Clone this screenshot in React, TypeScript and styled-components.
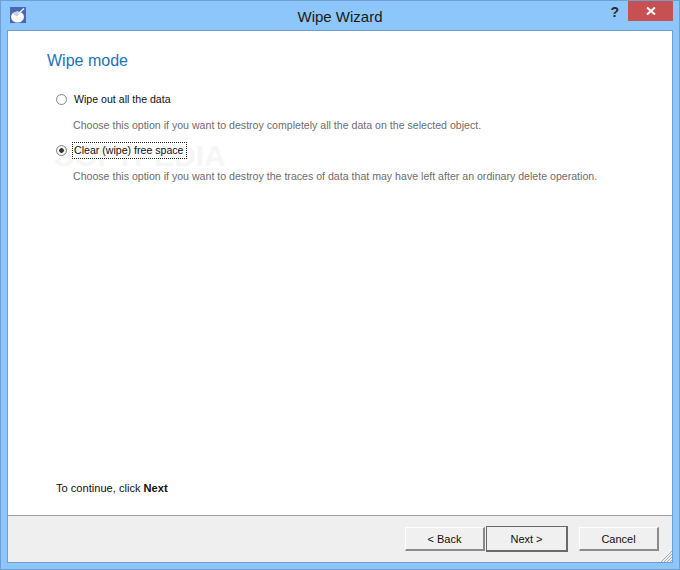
import React from "react";
import styled, { createGlobalStyle } from "styled-components";

const GlobalStyle = createGlobalStyle`
  html, body {
    margin: 0;
    padding: 0;
    width: 680px;
    height: 570px;
    overflow: hidden;
    font-family: "Liberation Sans", Arial, sans-serif;
  }
`;

const options = [
  {
    label: "Wipe out all the data",
    hint: "Choose this option if you want to destroy completely all the data on the selected object.",
    checked: false,
  },
  {
    label: "Clear (wipe) free space",
    hint: "Choose this option if you want to destroy the traces of data that may have left after an ordinary delete operation.",
    checked: true,
  },
];

const AppIcon = () => (
  <S.IconBox>
    <svg width="16" height="16" viewBox="0 0 16 16">
      <rect width="16" height="16" fill="#4a66b4" />
      <ellipse cx="7.5" cy="10" rx="6.5" ry="5.5" fill="#fff" />
      <path d="M3 7 L7 4 L10.5 6.5 L7 9.5 Z" fill="#c4cde6" />
      <path d="M8 7 L14 1.5" stroke="#e8ecf6" strokeWidth="1.6" />
    </svg>
  </S.IconBox>
);

const App = () => {
  return (
    <>
      <GlobalStyle />
      <S.Window>
        <S.TitleBar>
          <AppIcon />
          <S.Title>Wipe Wizard</S.Title>
          <S.Help>?</S.Help>
          <S.Close>
            <svg width="10" height="8" viewBox="0 0 10 8">
              <path d="M1 0.5 L9 7.5 M9 0.5 L1 7.5" stroke="#fff" strokeWidth="2" />
            </svg>
          </S.Close>
        </S.TitleBar>
        <S.Client>
          <S.Content>
            <S.Watermark>SOFTPEDIA</S.Watermark>
            <S.Heading>Wipe mode</S.Heading>
            <S.Options>
              {options.map((o) => (
                <S.Option key={o.label}>
                  <S.LabelRow>
                    <S.Radio $checked={o.checked} />
                    <S.Label $focused={o.checked}>{o.label}</S.Label>
                  </S.LabelRow>
                  <S.Hint>{o.hint}</S.Hint>
                </S.Option>
              ))}
            </S.Options>
            <S.Continue>
              To continue, click <b>Next</b>
            </S.Continue>
          </S.Content>
          <S.Footer>
            <S.Button>&lt; Back</S.Button>
            <S.Button $primary>Next &gt;</S.Button>
            <S.Button $cancel>Cancel</S.Button>
            <S.Grip>
              <svg width="12" height="12" viewBox="0 0 12 12">
                <path d="M12 1 L1 12 M12 4 L4 12 M12 7 L7 12 M12 10 L10 12" stroke="#a8a8a8" strokeWidth="1" />
              </svg>
            </S.Grip>
          </S.Footer>
        </S.Client>
      </S.Window>
    </>
  );
};

export default App;

const S = {
  Window: styled.div`
    box-sizing: border-box;
    width: 680px;
    height: 570px;
    background: #8cc6fa;
    border: 1px solid #6f9fd0;
    padding: 0 6px 6px;
    display: flex;
    flex-direction: column;
  `,
  TitleBar: styled.div`
    height: 29px;
    display: flex;
    align-items: flex-start;
    position: relative;
    flex-shrink: 0;
  `,
  IconBox: styled.div`
    width: 16px;
    height: 16px;
    margin: 6px 0 0 3px;
    line-height: 0;
  `,
  Title: styled.div`
    position: absolute;
    left: 0;
    right: 0;
    top: 6px;
    text-align: center;
    font-size: 15px;
    line-height: 20px;
    color: #1a1a1a;
  `,
  Help: styled.div`
    position: absolute;
    right: 54px;
    top: 2px;
    font-size: 14px;
    line-height: 18px;
    font-weight: bold;
    color: #2a2a2a;
  `,
  Close: styled.div`
    position: absolute;
    right: 0;
    top: 0;
    width: 45px;
    height: 20px;
    background: #c75050;
    display: flex;
    align-items: center;
    justify-content: center;
  `,
  Client: styled.div`
    flex: 1;
    display: flex;
    flex-direction: column;
    border: 1px solid #6f9fd0;
    background: #fff;
    min-height: 0;
  `,
  Content: styled.div`
    flex: 1;
    position: relative;
    display: flex;
    flex-direction: column;
    padding: 20px 0 0 39px;
    background: #fff;
  `,
  Heading: styled.div`
    font-size: 16px;
    line-height: 20px;
    color: #1a73ba;
  `,
  Options: styled.div`
    position: relative;
    display: flex;
    flex-direction: column;
    margin-top: 20px;
    gap: 9px;
    padding-left: 9px;
  `,
  Option: styled.div`
    display: flex;
    flex-direction: column;
    gap: 9px;
  `,
  LabelRow: styled.div`
    display: flex;
    align-items: center;
    height: 17px;
  `,
  Radio: styled.span<{ $checked: boolean }>`
    box-sizing: border-box;
    width: 11px;
    height: 11px;
    border-radius: 50%;
    border: 1px solid #858585;
    background: ${(p) => (p.$checked ? "radial-gradient(circle, #333 0 2px, #f4f4f4 2.6px)" : "#fff")};
    flex-shrink: 0;
    margin-right: 5px;
  `,
  Label: styled.span<{ $focused: boolean }>`
    font-size: 10.6px;
    line-height: 15px;
    color: #111;
    padding: 0 2px 0 1px;
    border: 1px ${(p) => (p.$focused ? "dotted #222" : "solid transparent")};
    white-space: nowrap;
  `,
  Hint: styled.div`
    font-size: 10.6px;
    line-height: 16px;
    color: #6d6d6d;
    padding-left: 17px;
    white-space: nowrap;
  `,
  Watermark: styled.div`
    position: absolute;
    left: 46px;
    top: 107px;
    font-size: 30px;
    line-height: 36px;
    font-weight: bold;
    color: #f6f6f6;
    pointer-events: none;
  `,
  Continue: styled.div`
    margin-top: auto;
    margin-bottom: 19px;
    padding-left: 9px;
    font-size: 11.1px;
    line-height: 16px;
    color: #111;
  `,
  Footer: styled.div`
    box-sizing: border-box;
    height: 47px;
    flex-shrink: 0;
    background: #efefef;
    border-top: 1px solid #a0a0a0;
    position: relative;
    display: flex;
    align-items: flex-start;
    padding: 10px 13px 0 0;
    justify-content: flex-end;
  `,
  Button: styled.button<{ $primary?: boolean; $cancel?: boolean }>`
    box-sizing: border-box;
    width: ${(p) => (p.$primary ? "82px" : "80px")};
    height: ${(p) => (p.$primary ? "26px" : "24px")};
    margin-top: ${(p) => (p.$primary ? "0" : "1px")};
    margin-left: ${(p) => (p.$cancel ? "11px" : p.$primary ? "1px" : "0")};
    background: #f0f0f0;
    color: #111;
    font-family: inherit;
    font-size: 11px;
    padding: 0;
    border-style: solid;
    border-color: ${(p) => (p.$primary ? "#6a6a6a" : "#fff #8a8a8a #8a8a8a #fff")};
    border-width: 1px 2px 2px 1px;
    outline: none;
  `,
  Grip: styled.div`
    position: absolute;
    right: 0;
    bottom: 0;
    line-height: 0;
  `,
};
